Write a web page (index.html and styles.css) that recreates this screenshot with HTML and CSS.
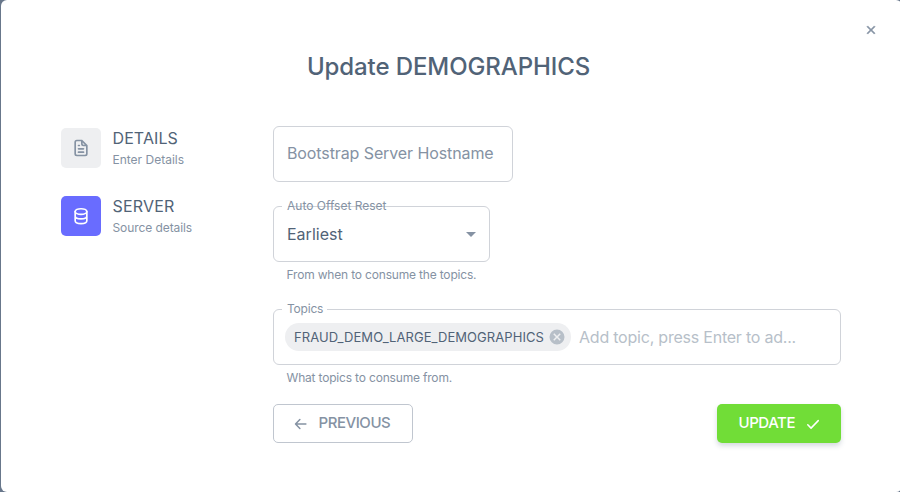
FILE: index.html
```html
<!DOCTYPE html>
<html lang="en">
<head>
<meta charset="utf-8">
<title>Update DEMOGRAPHICS</title>
<link rel="stylesheet" href="styles.css">
</head>
<body>
<main class="dialog">
  <button class="close" aria-label="Close"><svg width="20" height="20" viewBox="0 0 24 24"><path d="M19 6.41 17.59 5 12 10.59 6.41 5 5 6.41 10.59 12 5 17.59 6.41 19 12 13.41 17.59 19 19 17.59 13.41 12Z"/></svg></button>
  <h1 class="title"><span>Update DEMOGRAPHICS</span></h1>
  <div class="content">
    <nav class="steps">
      <div class="step">
        <div class="step-icon"><svg width="20" height="20" viewBox="0 0 24 24"><path d="M19.94 8.68v-.06a1.3 1.3 0 0 0-.22-.33l-6-6a1.3 1.3 0 0 0-.4-.23A1 1 0 0 0 13 2H7a3 3 0 0 0-3 3v14a3 3 0 0 0 3 3h10a3 3 0 0 0 3-3V9a1 1 0 0 0-.06-.32ZM14 5.41 16.59 8H15a1 1 0 0 1-1-1ZM18 19a1 1 0 0 1-1 1H7a1 1 0 0 1-1-1V5a1 1 0 0 1 1-1h5v3a3 3 0 0 0 3 3h3ZM9 8a1 1 0 0 0 0 2h1a1 1 0 0 0 0-2Zm0 4a1 1 0 0 0 0 2h6a1 1 0 0 0 0-2Zm0 4a1 1 0 0 0 0 2h6a1 1 0 0 0 0-2Z"/></svg></div>
        <div><div class="step-title details">DETAILS</div><div class="step-sub">Enter Details</div></div>
      </div>
      <div class="step">
        <div class="step-icon active"><svg width="20" height="20" viewBox="0 0 24 24"><g class="line"><ellipse cx="12" cy="6.7" rx="7" ry="3.4"/><path d="M5 6.7v11c0 1.9 3.1 3.4 7 3.4s7-1.5 7-3.4v-11M5 12.1c0 1.9 3.1 3.4 7 3.4s7-1.5 7-3.4"/></g></svg></div>
        <div><div class="step-title server">SERVER</div><div class="step-sub source">Source details</div></div>
      </div>
    </nav>
    <form class="form">
      <div class="field host"><span>Bootstrap Server Hostname</span></div>
      <div class="field select">
        <i class="notch offset"></i><label class="offset-label">Auto Offset Reset</label>
        <span>Earliest</span>
        <svg width="24" height="24" viewBox="0 0 24 24"><path d="m7 10 5 5 5-5Z"/></svg>
      </div>
      <p class="hint from">From when to consume the topics.</p>
      <div class="field topics">
        <i class="notch topic"></i><label class="topic-label">Topics</label>
        <div class="chip"><span>FRAUD_DEMO_LARGE_DEMOGRAPHICS</span><svg width="18" height="18" viewBox="0 0 24 24"><path d="M12 2a10 10 0 1 0 0 20 10 10 0 0 0 0-20Zm5 13.59L15.59 17 12 13.41 8.41 17 7 15.59 10.59 12 7 8.41 8.41 7 12 10.59 15.59 7 17 8.41 13.41 12Z"/></svg></div>
        <span class="placeholder">Add topic, press Enter to ad...</span>
      </div>
      <p class="hint what">What topics to consume from.</p>
      <div class="actions">
        <button type="button" class="previous"><svg width="18" height="18" viewBox="0 0 24 24"><path class="line" d="M18.5 12H5m5.5-6L4.7 12l5.8 6"/></svg><span>PREVIOUS</span></button>
        <button type="button" class="update"><span>UPDATE</span><svg width="18" height="18" viewBox="0 0 24 24"><path class="line" d="m5 13 4.4 4.5L19 7.5"/></svg></button>
      </div>
    </form>
  </div>
</main>
</body>
</html>
```
FILE: styles.css
```css
* { box-sizing: border-box; }
body { margin: 0; height: 492px; overflow: hidden; background: #68778b; font-family: Inter, "Liberation Sans", sans-serif; color: #516377; }
.dialog { position: relative; width: 901px; height: 492px; margin-left: 1px; padding: 48px 60px 0; border-radius: 6px; background: #fff; }
svg { display: block; flex: none; fill: currentColor; }
.line { fill: none; stroke: currentColor; stroke-width: 2; stroke-linecap: round; stroke-linejoin: round; }
button { font: inherit; cursor: pointer; }
.close { position: absolute; left: 860px; top: 20px; padding: 0; border: 0; background: none; color: #8592a3; }
.close svg { width: 20px; height: 20px; padding: 3px; stroke: currentColor; }
.title { width: 775px; margin: 0; text-align: center; font-size: 24px; line-height: 38px; font-weight: 450; letter-spacing: -.1px; }
.content { display: flex; margin-top: 40px; }
.steps { width: 212px; display: flex; flex-direction: column; gap: 24px; }
.step { display: flex; align-items: center; gap: 11.5px; height: 44px; }
.step-icon { display: grid; place-items: center; width: 40px; height: 40px; border-radius: 5px; background: #eeeff1; color: #8592a3; }
.step-icon.active { background: #696cff; color: #fff; }
.step-title { font-size: 16px; line-height: 22px; white-space: nowrap; }
.step-title.details { letter-spacing: .1px; }
.step-title.server { letter-spacing: .2px; }
.step-sub { font-size: 12px; line-height: 20px; padding-top: 1px; margin-bottom: -1px; color: #8592a3; white-space: nowrap; }
.step-sub.source { letter-spacing: -.08px; }
.form { width: 568px; }
.field { position: relative; display: flex; align-items: center; height: 56px; border: 1px solid #d0d3d9; border-radius: 6px; padding: 0 13px; font-size: 16px; white-space: nowrap; }
.host { width: 240px; color: #8592a3; padding-bottom: 2px; letter-spacing: -.1px; }
.select { width: 217px; margin-top: 24px; justify-content: space-between; padding-right: 6px; }
.select svg { color: #8592a3; }
.notch { position: absolute; top: -1px; left: 8px; height: 1px; background: #fff; }
.notch.offset { width: 6px; }
.notch.topic { width: 45px; }
.field label { position: absolute; left: 13px; top: -9px; font-size: 12px; line-height: 16px; color: #8592a3; }
.field .topic-label { letter-spacing: -.2px; }
.hint { margin: 3px 13px 0 13.5px; font-size: 12px; line-height: 20px; color: #8592a3; white-space: nowrap; letter-spacing: -.18px; }
.topics { margin-top: 24px; padding-left: 11px; }
.chip { display: flex; align-items: center; justify-content: space-between; width: 286px; height: 28px; border-radius: 14px; background: #eeeff1; padding: 0 5px 0 9px; font-size: 13px; letter-spacing: .06px; }
.chip svg { color: #b7bfc8; }
.placeholder { margin-left: 8px; color: #b7bfc9; letter-spacing: -.22px; }
.actions { display: flex; justify-content: space-between; margin-top: 16px; }
.previous, .update { display: flex; align-items: center; height: 39px; border-radius: 5px; font-size: 15px; font-weight: 450; padding: 0 18px; letter-spacing: -.45px; }
.previous span, .update span { padding-bottom: 2px; }
.previous { width: 140px; border: 1px solid #c0c6cf; background: #fff; color: #8592a3; gap: 8.5px; }
.update { width: 124px; border: 0; background: #71dd37; color: #fff; padding: 0 19px 0 21.5px; justify-content: space-between; box-shadow: 0 3px 5px rgba(67, 89, 113, .22); }
```
